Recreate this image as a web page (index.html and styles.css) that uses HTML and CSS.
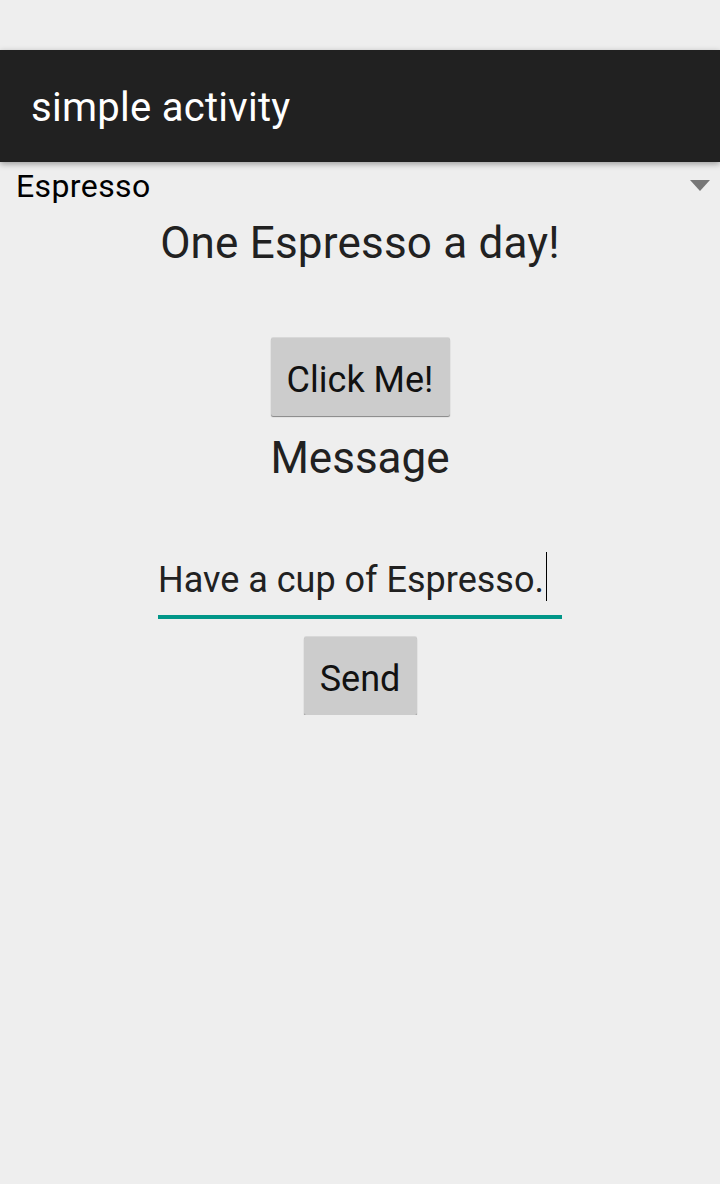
FILE: index.html
```html
<!DOCTYPE html>
<html>
<head>
<meta charset="utf-8">
<link rel="stylesheet" href="styles.css">
</head>
<body>
<div class="status"></div>
<header class="toolbar">simple activity</header>
<main class="content">
  <div class="spinner">
    <span class="spinner-text">Espresso</span>
    <svg class="spinner-arrow" width="20" height="12" viewBox="0 0 20 12"><polygon points="0,0 20,0 10,11" fill="#777"/></svg>
  </div>
  <div class="headline">One Espresso a day!</div>
  <button class="btn btn-click">Click Me!</button>
  <div class="label">Message</div>
  <div class="edit"><span class="edit-text">Have a cup of Espresso.</span><span class="cursor"></span></div>
  <button class="btn btn-send">Send</button>
</main>
</body>
</html>
```
FILE: styles.css
```css
html, body {
  margin: 0;
  padding: 0;
  background: #eeeeee;
  font-family: Roboto, "Liberation Sans", sans-serif;
}
.status {
  height: 50px;
  background: #eeeeee;
}
.toolbar {
  box-sizing: border-box;
  height: 112px;
  background: #212121;
  color: #ffffff;
  font-size: 40px;
  line-height: 48px;
  letter-spacing: 0.27px;
  padding: 34px 0 0 31px;
  position: relative;
  z-index: 1;
  box-shadow: 0 2px 6px rgba(0,0,0,0.35);
}
.content {
  display: flex;
  flex-direction: column;
  align-items: center;
}
.spinner {
  align-self: stretch;
  display: flex;
  align-items: flex-start;
  justify-content: space-between;
  padding: 4px 10px 0 16px;
  height: 40px;
}
.spinner-text {
  font-size: 32px;
  line-height: 40px;
  letter-spacing: 0.4px;
  color: #000000;
}
.spinner-arrow {
  margin-top: 14px;
}
.headline {
  margin-top: 11px;
  font-size: 44px;
  line-height: 52px;
  letter-spacing: 0.2px;
  color: #212121;
}
.btn {
  box-sizing: border-box;
  height: 78px;
  margin: 0;
  border: none;
  border-radius: 2px;
  background: #cccccc;
  box-shadow: 0 1px 1px rgba(0,0,0,0.45), 0 -1px 0 #d8d8d8;
  font-family: Roboto, "Liberation Sans", sans-serif;
  font-size: 36px;
  line-height: 42px;
  color: #111111;
  padding: 21px 0 15px;
  text-align: center;
}
.btn-click {
  margin-top: 69px;
  width: 179px;
}
.label {
  margin-top: 16px;
  font-size: 44px;
  line-height: 52px;
  color: #212121;
}
.edit {
  margin-top: 75px;
  width: 404px;
  box-sizing: border-box;
  padding: 0 0 14px 0;
  border-bottom: 4px solid #009688;
  display: flex;
  align-items: flex-start;
}
.edit-text {
  font-size: 36px;
  line-height: 42px;
  color: #212121;
}
.cursor {
  width: 1px;
  height: 49px;
  background: #000000;
  margin: -7px 0 0 2px;
}
.btn-send {
  margin-top: 18px;
  width: 113px;
}
```
